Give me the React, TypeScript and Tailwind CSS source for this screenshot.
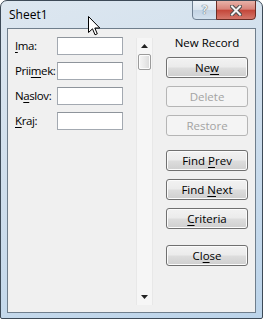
import React from "react";

const U = ({ children }: { children: React.ReactNode }) => <span className="underline underline-offset-2">{children}</span>;

const fields: { label: React.ReactNode }[] = [
  { label: <><U>I</U>ma:</> },
  { label: <>Prii<U>m</U>ek:</> },
  { label: <>N<U>a</U>slov:</> },
  { label: <><U>K</U>raj:</> },
];

function Btn({ children, disabled, className = "" }: { children: React.ReactNode; disabled?: boolean; className?: string }) {
  return (
    <div
      className={
        "flex h-[21px] w-[82px] items-center justify-center rounded-[3px] border leading-none " +
        (disabled
          ? "border-[#b5b5b5] bg-[#f4f4f4] text-[#a3a3a3] "
          : "border-[#707070] bg-[linear-gradient(to_bottom,#f2f2f2_0%,#ebebeb_48%,#dddddd_52%,#cfcfcf_100%)] text-black shadow-[inset_0_0_0_1px_#fbfbfb] ") +
        className
      }
    >
      <span>{children}</span>
    </div>
  );
}

export default function App() {
  return (
    <div
      className="relative h-[319px] w-[263px] overflow-hidden rounded-t-[7px] rounded-b-[2px] border border-[#3d4a57] bg-[linear-gradient(160deg,#dde7f0_0%,#cfdeec_45%,#bcd4ea_100%)] px-[6px] pb-[5px] text-[11.5px]"
      style={{ fontFamily: '"Open Sans", "Noto Sans", sans-serif' }}
    >
      {/* title bar */}
      <div className="flex h-[27px] items-start">
        <div className="pl-[2px] pt-[6px] text-[12px] leading-[16px] text-black">Sheet1</div>
        <div className="ml-auto -mt-px flex h-[20px]">
          <div className="flex w-[25px] items-center justify-center rounded-bl-[4px] border border-[#6e7f91] bg-[linear-gradient(to_bottom,#eef3f8_0%,#dae4ee_50%,#c3d3e3_52%,#d3e1ee_100%)] text-[12px] font-bold leading-none text-[#e9eef3] [text-shadow:0_0_1px_#56606b,0_0_1px_#56606b]">
            ?
          </div>
          <div className="-ml-px flex w-[40px] items-center justify-center rounded-br-[4px] border border-[#6b2d25] bg-[linear-gradient(to_bottom,#e8b2a8_0%,#d8847a_45%,#c4483b_52%,#d4776b_100%)]">
            <svg width="12" height="11" viewBox="0 0 12 11">
              <path d="M2 1.5 L10 9.5 M10 1.5 L2 9.5" stroke="#4a4a4a" strokeWidth="4" strokeLinecap="square" />
              <path d="M2 1.5 L10 9.5 M10 1.5 L2 9.5" stroke="#f4f4f4" strokeWidth="2" strokeLinecap="square" />
            </svg>
          </div>
        </div>
      </div>

      {/* client area */}
      <div className="flex h-[285px] border border-[#6f7e8c] bg-[#f0f0f0] text-black">
        <div className="flex w-[128px] flex-col gap-[7px] pl-[7px] pt-[8px]">
          {fields.map((f, i) => (
            <div key={i} className="flex h-[18px] items-center">
              <div className="w-[42px] whitespace-nowrap leading-none tracking-[-0.4px]"><span>{f.label}</span></div>
              <div className="h-[18px] w-[66px] border border-[#a3a9b1] border-t-[#8e949b] bg-white" />
            </div>
          ))}
        </div>

        {/* scrollbar */}
        <div className="mt-[9px] flex h-[267px] w-[17px] flex-col border-x border-[#e8e8e8] bg-[#f6f6f6]">
          <div className="flex h-[16px] items-center justify-center">
            <svg width="7" height="4" viewBox="0 0 7 4"><path d="M3.5 0 L7 4 L0 4 Z" fill="#222" /></svg>
          </div>
          <div className="mx-px h-[16px] rounded-[2px] border border-[#9b9b9b] bg-[linear-gradient(to_right,#f6f6f6,#e9e9e9_50%,#dadada)] shadow-[inset_0_0_0_1px_#fcfcfc]" />
          <div className="mt-auto flex h-[16px] items-center justify-center">
            <svg width="7" height="4" viewBox="0 0 7 4"><path d="M0 0 L7 0 L3.5 4 Z" fill="#222" /></svg>
          </div>
        </div>

        {/* buttons */}
        <div className="flex flex-col pl-[13px] pt-[6px]">
          <div className="w-[82px] text-center leading-[16px]">New Record</div>
          <Btn className="mt-[6px]">Ne<U>w</U></Btn>
          <Btn disabled className="mt-[8px]">Delete</Btn>
          <Btn disabled className="mt-[8px]">Restore</Btn>
          <Btn className="mt-[14px]">Find <U>P</U>rev</Btn>
          <Btn className="mt-[8px]">Find <U>N</U>ext</Btn>
          <Btn className="mt-[8px]"><U>C</U>riteria</Btn>
          <Btn className="mt-[16px]">Cl<U>o</U>se</Btn>
        </div>
      </div>

      {/* mouse cursor */}
      <svg className="absolute left-[87px] top-[15px]" width="13" height="20" viewBox="0 0 13 20">
        <path d="M0.5 0.5 L0.5 16.5 L4.5 12.8 L7 18.8 L9.3 17.8 L6.8 12 L11.8 12 Z" fill="#fff" stroke="#000" strokeWidth="1" strokeLinejoin="miter" />
      </svg>
    </div>
  );
}
